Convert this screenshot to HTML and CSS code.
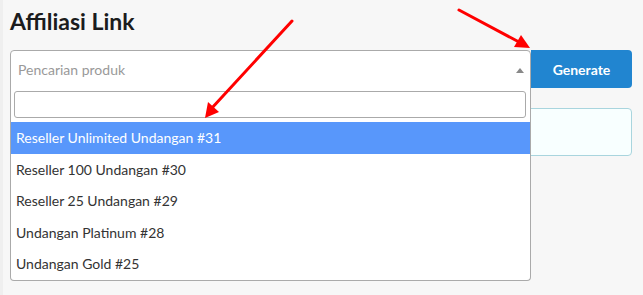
FILE: index.html
```html
<!DOCTYPE html>
<html lang="id">
<head>
<meta charset="utf-8">
<title>Affiliasi Link</title>
<link rel="stylesheet" href="styles.css">
</head>
<body>
<div class="page">
  <h1 class="title">Affiliasi Link</h1>
  <div class="form-row">
    <div class="select-wrap">
      <div class="select">
        <span class="placeholder">Pencarian produk</span>
        <span class="caret"></span>
      </div>
      <div class="dropdown">
        <div class="search"><input class="search-field" type="text"></div>
        <ul class="results">
          <li class="option highlighted">Reseller Unlimited Undangan #31</li>
          <li class="option">Reseller 100 Undangan #30</li>
          <li class="option">Reseller 25 Undangan #29</li>
          <li class="option">Undangan Platinum #28</li>
          <li class="option">Undangan Gold #25</li>
        </ul>
      </div>
    </div>
    <button class="btn">Generate</button>
  </div>
  <div class="message"></div>
</div>
<svg class="annotations" width="643" height="295" viewBox="0 0 643 295">
  <line x1="292" y1="21" x2="211" y2="109" stroke="#ff0000" stroke-width="3" stroke-linecap="round"/>
  <polygon points="205,118 208,102 219,112" fill="#ff0000"/>
  <line x1="459" y1="10" x2="519" y2="42" stroke="#ff0000" stroke-width="3" stroke-linecap="round"/>
  <polygon points="530,48 514,47 521,35" fill="#ff0000"/>
</svg>
</body>
</html>
```
FILE: styles.css
```css
html, body {
  margin: 0;
  padding: 0;
}
body {
  background: #f7f7f7;
  font-family: Lato, "Liberation Sans", sans-serif;
  width: 643px;
  height: 295px;
  overflow: hidden;
  position: relative;
  border-left: 3px solid #efefef;
  box-sizing: border-box;
}
.page {
  padding: 0 11px 0 7px;
}
.title {
  margin: 0;
  padding-top: 6px;
  font-size: 23px;
  line-height: 30px;
  font-weight: 700;
  color: #1b1c1d;
  height: 44px;
}
.form-row {
  display: flex;
  height: 38px;
}
.select-wrap {
  position: relative;
  flex: 0 0 521px;
}
.select {
  box-sizing: border-box;
  height: 38px;
  border: 1px solid #aaa;
  border-radius: 4px 4px 0 0;
  background: #fff;
  display: flex;
  align-items: center;
  padding-left: 7px;
  position: relative;
}
.placeholder {
  color: #999;
  font-size: 14px;
}
.caret {
  position: absolute;
  right: 6px;
  top: 17px;
  width: 0;
  height: 0;
  border-left: 4px solid transparent;
  border-right: 4px solid transparent;
  border-bottom: 5px solid #888;
}
.dropdown {
  position: absolute;
  left: 0;
  top: 37px;
  width: 521px;
  box-sizing: border-box;
  background: #fff;
  border: 1px solid #aaa;
  border-top: none;
  border-radius: 0 0 4px 4px;
  z-index: 5;
}
.search {
  padding: 4px 4px 4px 3px;
}
.search-field {
  display: block;
  box-sizing: border-box;
  width: 100%;
  height: 27px;
  margin: 0;
  border: 1px solid #aaa;
  border-radius: 3px;
  background: #fff;
  outline: none;
}
.results {
  list-style: none;
  margin: 0;
  padding: 0;
}
.option {
  padding: 6px 5px;
  font-size: 14px;
  line-height: 1.4;
  color: #333;
}
.option.highlighted {
  background: #5897fb;
  color: #fff;
}
.btn {
  flex: 0 0 101px;
  height: 38px;
  margin: 0;
  border: none;
  border-radius: 0 4px 4px 0;
  background: #2185d0;
  color: #fff;
  font-family: Lato, "Liberation Sans", sans-serif;
  font-size: 14px;
  font-weight: 700;
  padding: 0;
}
.message {
  margin-top: 20px;
  height: 48px;
  box-sizing: border-box;
  background: #f8ffff;
  border: 1px solid #a9d5de;
  border-radius: 4px;
}
.annotations {
  position: absolute;
  left: -3px;
  top: 0;
  pointer-events: none;
  z-index: 10;
}
```
